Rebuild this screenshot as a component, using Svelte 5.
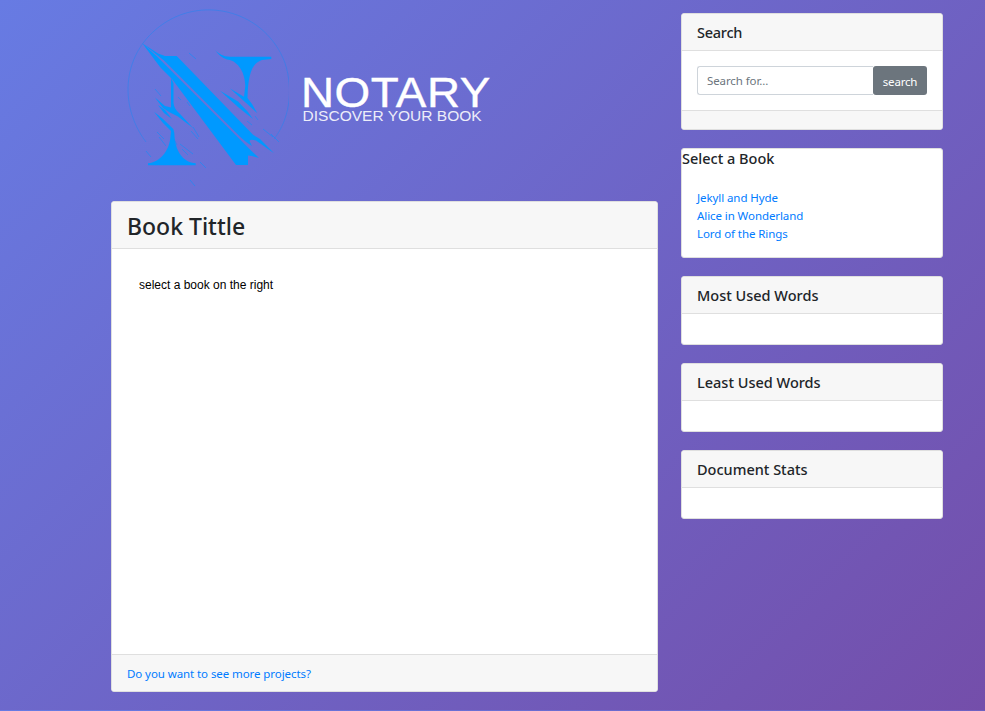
<script>
  const books = ['Jekyll and Hyde', 'Alice in Wonderland', 'Lord of the Rings'];
  const panels = ['Most Used Words', 'Least Used Words', 'Document Stats'];
</script>

<div class="page">
  <main>
    <header class="brand">
      <svg class="logo" width="162" height="190" viewBox="127 0 162 190" aria-hidden="true">
        <path class="ring" d="M146 142C118 105 122 52 163 24C205-5 266 12 285 63C294 91 289 120 274 139" />
        <g fill="#0099ff">
          <path d="M142.3 43.3L158 53.5L165 56H176.7L253.3 135L260 139L274 153.3L256 140.5Q250 139 249.5 141L252 146Q247 143 240 136.7L164 60.5Z" />
          <path d="M142.3 43.3L157 56.5L249 148.5L259 158L252 156L248 155.5V165H236L172 79L160 67Z" />
          <path d="M215 50C219 54 223 56.5 230 56.7H271.3V59L262 60C252 63 248 74 247.5 98L252 104L257.3 113.3L245 102L230 88.5L244 96.7L245.3 86C245 70 236 60 227 59.5C222 58 218 54 215 50Z" />
          <path d="M220 90.7L238 101.5L248 112L253 119L238 107Z" />
          <path d="M171 78L173.5 83V103Q174 109 180 114L193 128L178 116.5L170 112.5L163 108L155 97.5L165 106L171 107.5Z" />
          <path d="M154 111.7L163 119L173.3 129L174.3 133C175 152 183 162 195.7 163.3V165.3H148V163.3C162 162 170 148 170.5 136L171 131L163 123Z" />
          <path d="M158 105L165 110L172 119L164 113Z" />
        </g>
        <path class="flecks" d="M189 53L196 59M155 89L161 96M157 132L164 139M159 137L166 146M174 139L177 145M180 144L193 154M182 149L188 155M191 131L198 139M193 127L199 137M146 151L151 157M200 162L206 168M190 180L195 186M178 97L181 100M187 102L190 106M247 121L252 125M255 116L258 120M263 129L273 137M271 134L279 142" />
      </svg>
      <div class="wordmark">
        <div class="name">NOTARY</div>
        <div class="tagline">DISCOVER YOUR BOOK</div>
      </div>
    </header>

    <article class="card reader">
      <header class="card-header"><h1>Book Tittle</h1></header>
      <div class="content">select a book on the right</div>
      <footer><a href="#projects">Do you want to see more projects?</a></footer>
    </article>
  </main>

  <aside>
    <section class="card">
      <h2 class="card-header search-title">Search</h2>
      <form class="search-row" onsubmit={(e) => e.preventDefault()}>
        <input placeholder="Search for..." aria-label="Search for" />
        <button>search</button>
      </form>
      <div class="search-footer"></div>
    </section>

    <section class="card books">
      <h2>Select a Book</h2>
      <ul>
        {#each books as book}
          <li><a href="#book">{book}</a></li>
        {/each}
      </ul>
    </section>

    {#each panels as title}
      <section class="card">
        <h2 class="card-header">{title}</h2>
        <div class="stats-body"></div>
      </section>
    {/each}
  </aside>
</div>

<style>
  :global(html) { overflow: hidden; }
  :global(body) {
    margin: 0;
    height: 710px;
    background: linear-gradient(135deg, #677be3 0%, #744eaa 100%) 0 0 / 100% 710px;
    font-family: "Noto Sans", "Open Sans", sans-serif;
    color: #212529;
  }
  * { box-sizing: border-box; }
  .page {
    display: flex;
    gap: 23px;
    width: 832px;
    height: 710px;
    margin-left: 111px;
  }
  main { width: 547px; }
  .brand { display: flex; height: 201px; padding-left: 16px; }
  .logo { flex: none; }
  .ring { fill: none; stroke: #1688f5; stroke-width: 1; opacity: .45; }
  .flecks { fill: none; stroke: #168cf7; stroke-width: 1; opacity: .65; }
  .wordmark {
    padding: 74px 0 0 12px;
    color: #fff;
    font-family: "Liberation Sans", Arial, sans-serif;
    white-space: nowrap;
  }
  .name {
    font-size: 43px;
    line-height: 36px;
    letter-spacing: .5px;
    transform: scaleX(1.065);
    transform-origin: left;
    -webkit-text-stroke: .4px #fff;
  }
  .tagline {
    padding-left: 1.5px;
    font-size: 14.5px;
    line-height: 12px;
    opacity: .88;
    transform: scaleX(1.07);
    transform-origin: left;
  }
  .card {
    background: #fff;
    border: 1px solid #dfdfdf;
    border-radius: 3px;
    overflow: hidden;
  }
  .card-header { background: #f7f7f7; border-bottom: 1px solid #dfdfdf; }
  h1, h2 { margin: 0; font-weight: 500; color: #212529; }
  h1 { font-size: 23px; line-height: 49px; }
  h2 { font-size: 14.5px; line-height: 19px; }
  .search-title { letter-spacing: -.25px; }
  a { color: #007bff; text-decoration: none; letter-spacing: -.08px; }
  .reader { display: flex; flex-direction: column; height: 491px; }
  .reader .card-header { height: 47px; padding-left: 15px; }
  .content {
    flex: 1;
    padding: 29px 27px;
    color: #000;
    font: 12px/14px "Liberation Sans", Arial, sans-serif;
  }
  footer {
    height: 37px;
    padding-left: 15px;
    background: #f7f7f7;
    border-top: 1px solid #dfdfdf;
    font-size: 11.5px;
    line-height: 37px;
  }
  aside {
    display: flex;
    flex-direction: column;
    gap: 18px;
    width: 262px;
    padding-top: 13px;
  }
  h2.card-header { height: 37px; padding: 9px 15px; }
  .search-row { display: flex; height: 59px; padding: 15px; }
  input {
    width: 176px;
    height: 29px;
    padding: 0 9px;
    border: 1px solid #ced4da;
    border-right: 0;
    border-radius: 3px 0 0 3px;
    font: 11.5px "Noto Sans", "Open Sans", sans-serif;
    letter-spacing: -.1px;
  }
  input::placeholder { color: #6c757d; opacity: 1; }
  button {
    width: 54px;
    height: 29px;
    padding: 2px 0 0;
    border: 0;
    border-radius: 3px;
    background: #6c757d;
    color: #fff;
    font: 11.5px "Noto Sans", "Open Sans", sans-serif;
    letter-spacing: -.2px;
  }
  .search-footer { height: 19px; background: #f7f7f7; border-top: 1px solid #dfdfdf; }
  .books { height: 110px; }
  ul {
    margin: 0;
    padding: 21px 15px;
    list-style: none;
    font-size: 11.5px;
    line-height: 18px;
  }
  .stats-body { height: 30px; }
</style>
